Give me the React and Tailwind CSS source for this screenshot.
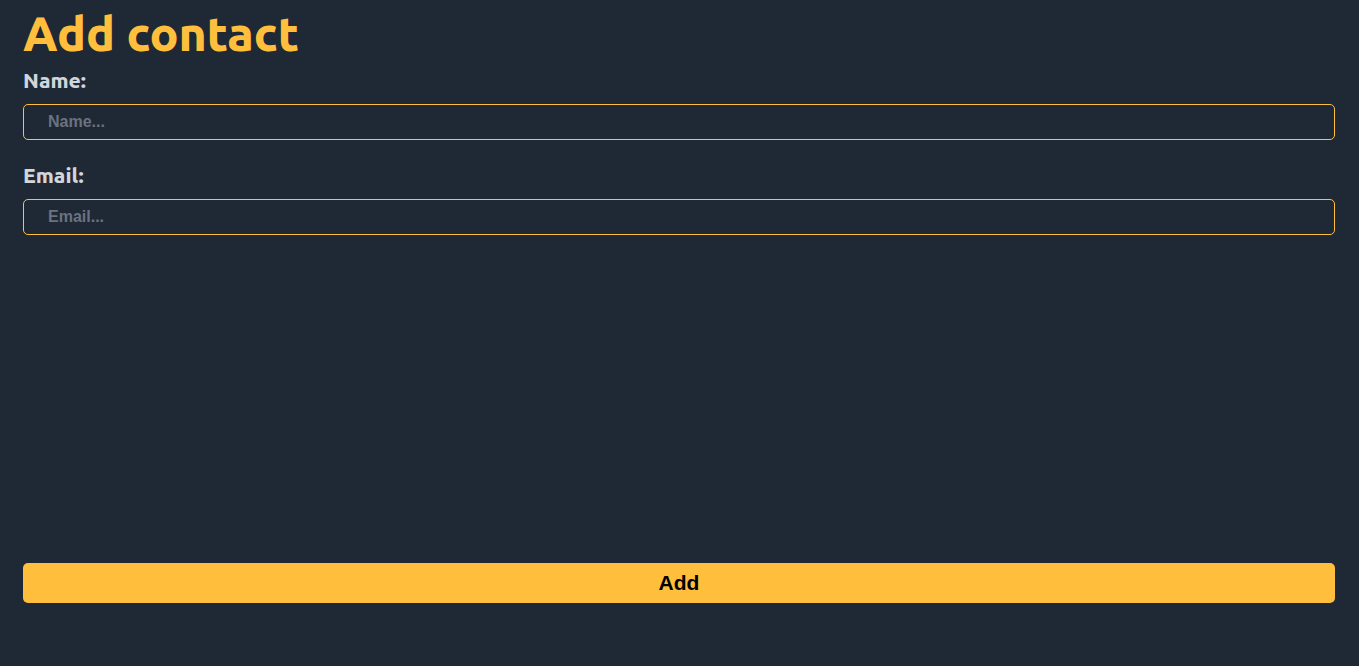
import React from "react";

const fields = [
  { id: "name", label: "Name:", placeholder: "Name...", type: "text" },
  { id: "email", label: "Email:", placeholder: "Email...", type: "email" },
];

function Field({ id, label, placeholder, type }) {
  return (
    <div className="flex flex-col gap-2.5">
      <label htmlFor={id} className="text-[21px] leading-7 font-black text-gray-300">
        {label}
      </label>
      <input
        id={id}
        name={id}
        type={type}
        placeholder={placeholder}
        className="h-9 w-full rounded-[5px] border border-[#ffbf3c] bg-transparent px-6 font-['Liberation_Sans',Arial,sans-serif] text-base font-bold text-gray-300 outline-none placeholder:text-[#6b7280]"
      />
    </div>
  );
}

export default function App() {
  return (
    <main className="flex min-h-screen flex-col bg-[#1f2935] pr-6 pl-[23px] pt-2 font-[Ubuntu,'Open_Sans',sans-serif]">
      <h1 className="text-5xl leading-[50px] font-black text-[#ffbf3c]">Add contact</h1>
      <form className="flex grow flex-col pt-2 pb-[63px]" onSubmit={(e) => e.preventDefault()}>
        <div className="flex flex-col gap-[21px]">
          {fields.map((field) => (
            <Field key={field.id} {...field} />
          ))}
        </div>
        <button
          type="submit"
          className="mt-auto h-10 w-full rounded-[5px] bg-[#ffbf3c] font-['Liberation_Sans',Arial,sans-serif] text-[21px] font-bold text-black"
        >
          Add
        </button>
      </form>
    </main>
  );
}
